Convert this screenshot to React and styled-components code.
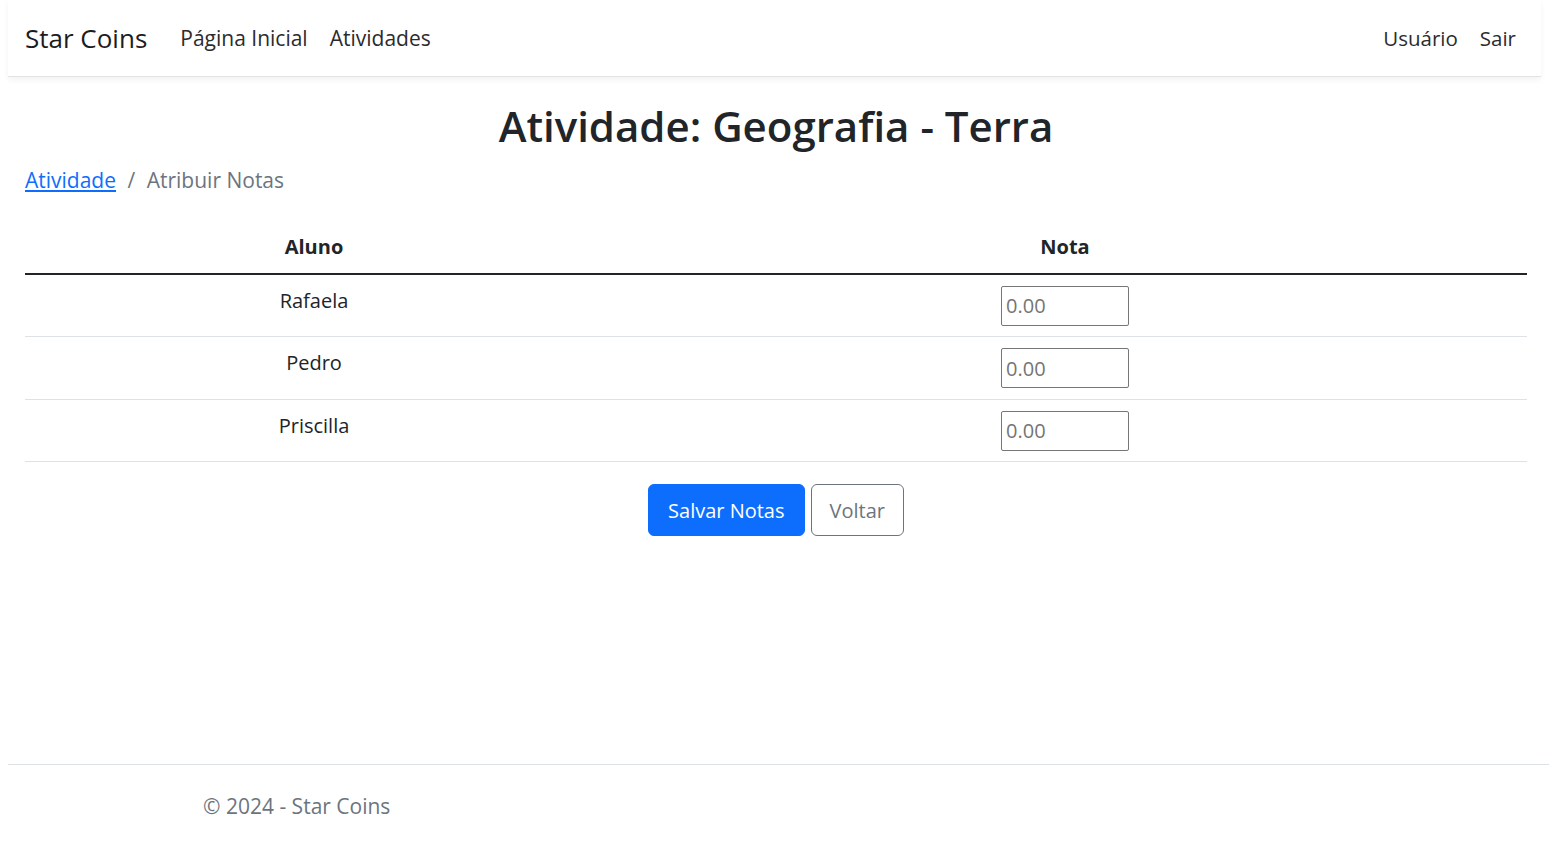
import React from "react";
import styled, { createGlobalStyle } from "styled-components";

const GlobalStyle = createGlobalStyle`
  body {
    margin: 0;
    background: #fff;
    font-family: "Open Sans", "Noto Sans", sans-serif;
    color: #212529;
    font-size: 20px;
    line-height: 1.5;
  }
`;

const Page = styled.div`
  padding: 0 8px;
  min-height: 847px;
  display: flex;
  flex-direction: column;
`;

const Navbar = styled.nav`
  height: 75px;
  display: flex;
  align-items: center;
  justify-content: space-between;
  padding: 1px 14px 0 17px;
  background: #fff;
  border-bottom: 1px solid #e3e3e6;
  box-shadow: 0 3px 6px rgba(0, 0, 0, 0.05);
`;

const NavGroup = styled.div`
  display: flex;
  align-items: center;
`;

const Brand = styled.a`
  font-size: 26px;
  color: #1c1c1e;
  text-decoration: none;
  margin-right: 22px;
`;

const NavLink = styled.a`
  font-size: ${(p) => (p.small ? "20.5px" : "21px")};
  color: #2b2b2e;
  text-decoration: none;
  padding: 0 11px;
`;

const Main = styled.main`
  padding: 0 14px 0 17px;
  flex: 1;
`;

const Title = styled.h1`
  margin: 24px 0 14px;
  text-align: center;
  font-size: 42px;
  font-weight: 600;
  line-height: 1.2;
  color: #212529;
`;

const Breadcrumb = styled.ol`
  list-style: none;
  margin: 0 0 25px;
  padding: 0;
  display: flex;
  font-size: 21px;
  color: #6c757d;
`;

const Crumb = styled.li`
  & + &::before {
    content: "/";
    padding: 0 11.5px;
    color: #6c757d;
  }
`;

const CrumbLink = styled.a`
  color: #0d6efd;
  text-decoration: underline;
`;

const Table = styled.table`
  width: 100%;
  border-collapse: collapse;
  font-size: 20px;
`;

const Th = styled.th`
  padding: 10px 10px 11px;
  font-weight: 700;
  text-align: center;
  line-height: 30px;
  border-bottom: 2px solid #212529;
`;

const Td = styled.td`
  padding: 11px 10px 10.5px;
  text-align: center;
  vertical-align: top;
  line-height: 30px;
  border-bottom: 1px solid #dee2e6;
`;

const GradeInput = styled.input`
  box-sizing: border-box;
  width: 128px;
  height: 40px;
  border: 1px solid #767676;
  border-radius: 2px;
  padding: 0 4px;
  font-family: inherit;
  font-size: 20px;
  color: #212529;
  vertical-align: top;
  &::placeholder {
    color: #757575;
  }
`;

const Actions = styled.div`
  display: flex;
  justify-content: center;
  gap: 6px;
  margin-top: 22px;
`;

const Button = styled.button`
  height: 52px;
  padding: 0 ${(p) => (p.primary ? "19px" : "18px")};
  border-radius: 6px;
  font-family: inherit;
  font-size: 20px;
  cursor: pointer;
  background: ${(p) => (p.primary ? "#0d6efd" : "#fff")};
  color: ${(p) => (p.primary ? "#fff" : "#6c757d")};
  border: 1px solid ${(p) => (p.primary ? "#0d6efd" : "#6c757d")};
`;

const Footer = styled.footer`
  border-top: 1px solid #dee2e6;
  margin-right: -8px;
  height: 83px;
  display: flex;
  align-items: center;
  padding: 2px 0 0 195px;
  box-sizing: border-box;
  font-size: 21px;
  color: #6c757d;
`;

const alunos = ["Rafaela", "Pedro", "Priscilla"];

export default function App() {
  return (
    <>
      <GlobalStyle />
      <Page>
        <Navbar>
          <NavGroup>
            <Brand href="#">Star Coins</Brand>
            <NavLink href="#">Página Inicial</NavLink>
            <NavLink href="#">Atividades</NavLink>
          </NavGroup>
          <NavGroup>
            <NavLink small href="#">Usuário</NavLink>
            <NavLink small href="#">Sair</NavLink>
          </NavGroup>
        </Navbar>
        <Main>
          <Title>Atividade: Geografia - Terra</Title>
          <Breadcrumb>
            <Crumb>
              <CrumbLink href="#">Atividade</CrumbLink>
            </Crumb>
            <Crumb>Atribuir Notas</Crumb>
          </Breadcrumb>
          <Table>
            <thead>
              <tr>
                <Th style={{ width: "558px" }}>Aluno</Th>
                <Th>Nota</Th>
              </tr>
            </thead>
            <tbody>
              {alunos.map((nome) => (
                <tr key={nome}>
                  <Td>{nome}</Td>
                  <Td>
                    <GradeInput type="number" step="0.01" placeholder="0.00" />
                  </Td>
                </tr>
              ))}
            </tbody>
          </Table>
          <Actions>
            <Button primary>Salvar Notas</Button>
            <Button>Voltar</Button>
          </Actions>
        </Main>
        <Footer>© 2024 - Star Coins</Footer>
      </Page>
    </>
  );
}
